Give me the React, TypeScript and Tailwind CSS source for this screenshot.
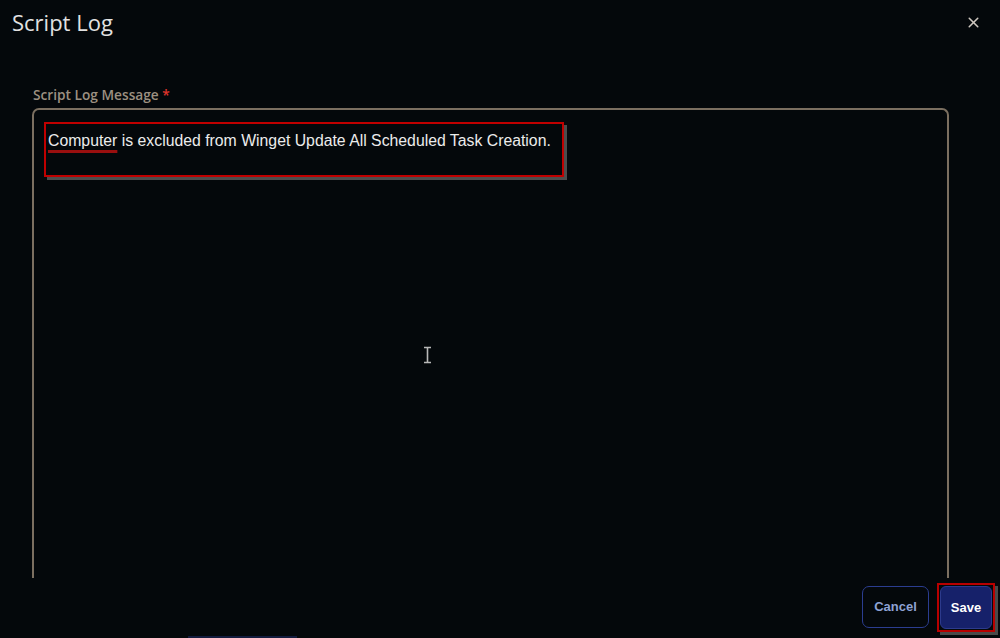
import { X } from "lucide-react"

export default function App() {
  return (
    <div className="relative flex h-[638px] w-[1000px] flex-col overflow-hidden bg-[#04080b] font-['Liberation_Sans',Arial,sans-serif]">
      {/* Header */}
      <div className="flex h-[44px] shrink-0 items-center justify-between pl-[12px] pr-[18px]">
        <h2 className="font-['Open_Sans',sans-serif] text-[22px] leading-none text-[#e2e2e2]">Script Log</h2>
        <X className="h-[17px] w-[17px] text-[#cfc8c0]" strokeWidth={2.2} />
      </div>

      {/* Body */}
      <div className="flex min-h-0 flex-1 flex-col pl-[32px] pr-[51px] pt-[41px]">
        <label className="mb-[3px] pl-[1px] font-['Open_Sans',sans-serif] text-[13.7px] font-semibold leading-[20px] text-[#9c9081]">
          Script Log Message <span className="text-[#e0342c]">*</span>
        </label>
        <div className="flex-1 rounded-t-[7px] border-2 border-b-0 border-[#7b6f60] pl-[10px] pt-[12px]">
          <div className="h-[55px] w-[520px] border-2 border-[#c00000] pl-[2px] pt-[5px] shadow-[3px_3px_0_#4d4d4d]">
            <span className="text-[15.8px] leading-[20px] text-[#ececec]">
              <span className="underline decoration-[#9a0f0f] decoration-[3px] underline-offset-[4px]">Computer</span> is
              excluded from Winget Update All Scheduled Task Creation.
            </span>
          </div>
        </div>
      </div>

      {/* Footer */}
      <div className="flex h-[60px] shrink-0 flex-col">
        <div className="flex flex-1 items-start justify-end gap-[8px] pr-[5px]">
          <button className="mt-[8px] h-[42px] w-[67px] rounded-[7px] border border-[#2b3d90] text-[13px] font-bold text-[#8ea2d4]">
            Cancel
          </button>
          <div className="mt-[5px] border-2 border-[#b80000] p-px shadow-[3px_3px_0_#4a4a4a]">
            <button className="h-[43px] w-[52px] rounded-[6px] border border-[#2c3a8c] bg-[#16216a] text-[13px] font-bold text-white">
              Save
            </button>
          </div>
        </div>
        <div className="flex h-[2px] items-end">
          <div className="ml-[188px] h-[2px] w-[109px] bg-[#131c3e]" />
        </div>
      </div>

      {/* I-beam cursor */}
      <svg className="absolute left-[423px] top-[346px]" width="9" height="18" viewBox="0 0 9 18">
        <path d="M1 1.5h7M1 16.5h7M4.5 1.5v15" stroke="#b8b8b8" strokeWidth="1.6" fill="none" />
      </svg>
    </div>
  )
}
